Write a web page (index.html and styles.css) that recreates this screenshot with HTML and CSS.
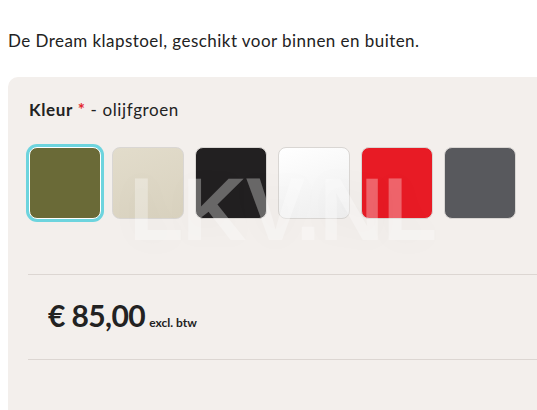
FILE: index.html
```html
<!DOCTYPE html>
<html lang="nl">
<head>
<meta charset="utf-8">
<title>Dream klapstoel</title>
<link rel="stylesheet" href="styles.css">
</head>
<body>
<p class="intro">De Dream klapstoel, geschikt voor binnen en buiten.</p>
<div class="card">
  <div class="option">
    <div class="label"><strong>Kleur</strong> <span class="req">*</span> - olijfgroen</div>
    <div class="swatches">
      <span class="swatch olive selected"></span>
      <span class="swatch beige"></span>
      <span class="swatch black"></span>
      <span class="swatch white"></span>
      <span class="swatch red"></span>
      <span class="swatch grey"></span>
    </div>
    <div class="watermark">LKV.NL</div>
  </div>
  <div class="price-row">
    <span class="price">€ 85,00</span><span class="tax">excl. btw</span>
  </div>
  <div class="rest"></div>
</div>
</body>
</html>
```

FILE: styles.css
```css
html, body {
  margin: 0;
  padding: 0;
  background: #ffffff;
  overflow: hidden;
}
body {
  font-family: Lato, "Noto Sans", sans-serif;
  color: #222222;
  padding: 0 0 0 8px;
}
.intro {
  margin: 0;
  padding-top: 29px;
  font-size: 17px;
  line-height: 24px;
  letter-spacing: 0.45px;
}
.card {
  margin-top: 24px;
  background: #f3efec;
  border-radius: 10px 0 0 0;
  padding: 20px 0 0 20px;
  height: 400px;
}
.option {
  position: relative;
  padding-bottom: 55px;
  border-bottom: 1px solid #dcd6d2;
}
.label {
  font-size: 17px;
  line-height: 25px;
  margin-left: 1px;
  letter-spacing: 0.6px;
}
.label strong {
  font-weight: 700;
}
.req {
  color: #e3262e;
  font-weight: 700;
}
.swatches {
  display: flex;
  gap: 11px;
  margin-top: 25px;
  margin-left: 1px;
}
.swatch {
  width: 70px;
  height: 70px;
  border: 1px solid #d9d6d3;
  border-radius: 8px;
  box-sizing: content-box;
}
.swatch.selected {
  border-color: #ffffff;
  box-shadow: 0 0 0 3px #6dd4de;
}
.olive { background: #6a6a37; }
.beige { background: linear-gradient(160deg, #e2dccb, #d9d2bf); }
.black { background: #222021; }
.white { background: linear-gradient(160deg, #ffffff, #efefef); }
.red { background: #e81b25; }
.grey { background: #58595d; }
.watermark {
  position: absolute;
  left: 101px;
  top: 68px;
  font-family: "Liberation Sans", Arial, sans-serif;
  font-weight: 700;
  font-size: 89px;
  line-height: 1;
  color: rgba(255, 255, 255, 0.32);
  letter-spacing: -1px;
  text-shadow: 0 0 30px rgba(0, 0, 0, 0.03);
  pointer-events: none;
}
.price-row {
  display: flex;
  align-items: baseline;
  gap: 4px;
  padding: 24px 0 28px 20px;
  border-bottom: 1px solid #dcd6d2;
}
.price {
  font-size: 30px;
  font-weight: 700;
  line-height: 32px;
  letter-spacing: -0.6px;
}
.tax {
  font-size: 12px;
  font-weight: 700;
}
```
